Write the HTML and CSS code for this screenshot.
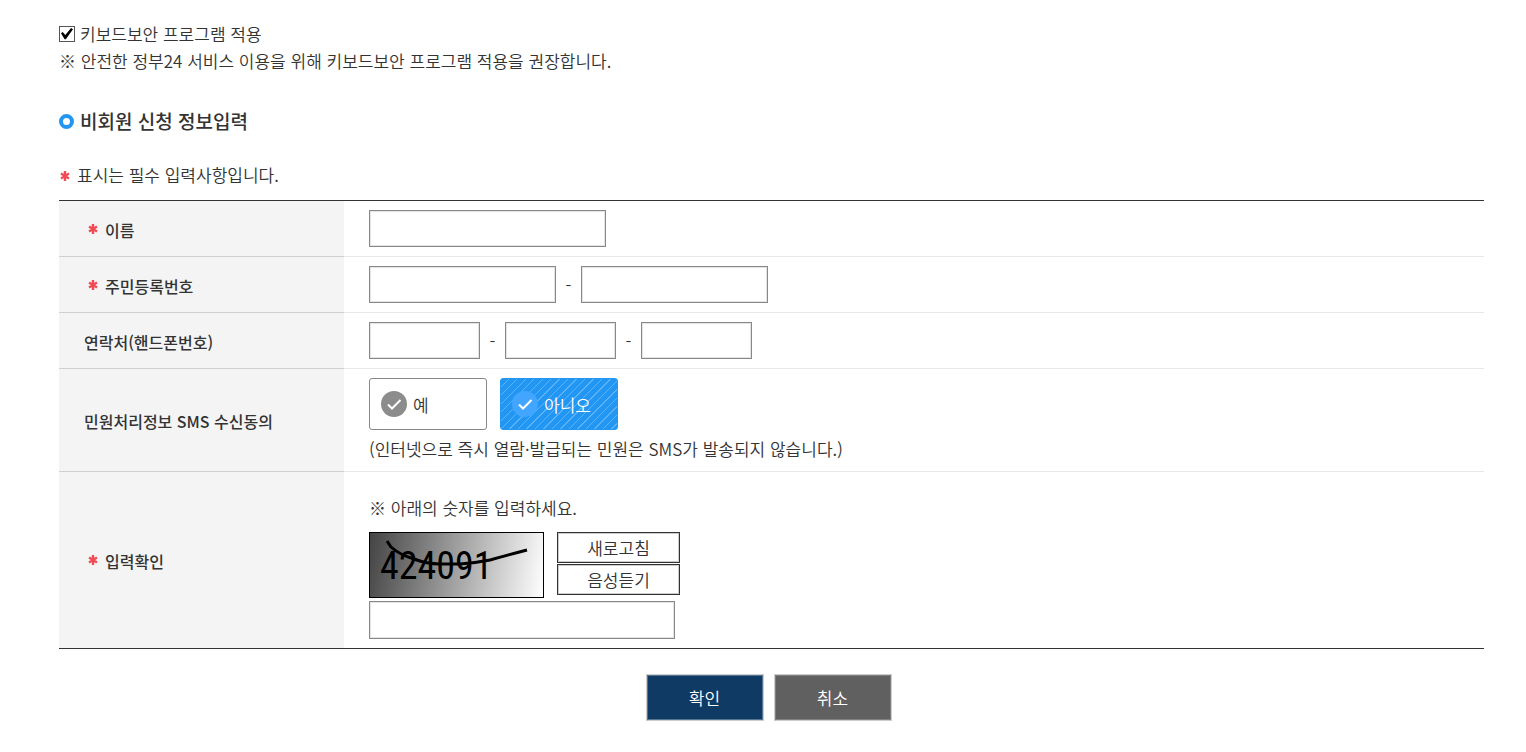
FILE: index.html
```html
<!DOCTYPE html>
<html lang="ko">
<head>
    <meta charset="UTF-8">
    <meta name="viewport" content="width=device-width, initial-scale=1.0">
    <title>비회원 신청</title>
    <link rel="stylesheet" href="styles.css">
</head>
<body>
    <form class="content">
        <div class="security">
            <label class="check"><input type="checkbox" checked>키보드보안 프로그램 적용</label>
            <p>※ 안전한 정부24 서비스 이용을 위해 키보드보안 프로그램 적용을 권장합니다.</p>
        </div>

        <h2 class="title">비회원 신청 정보입력</h2>

        <p class="notice"><svg class="star" viewBox="0 0 10 10"><path d="M5 0v10M1 2.5l8 5M9 2.5l-8 5"/></svg>표시는 필수 입력사항입니다.</p>

        <table class="form-table">
            <tr>
                <th class="required"><svg class="star" viewBox="0 0 10 10"><path d="M5 0v10M1 2.5l8 5M9 2.5l-8 5"/></svg><label for="name">이름</label></th>
                <td><input type="text" id="name" class="field w-name"></td>
            </tr>
            <tr>
                <th class="required"><svg class="star" viewBox="0 0 10 10"><path d="M5 0v10M1 2.5l8 5M9 2.5l-8 5"/></svg><label for="jumin1">주민등록번호</label></th>
                <td>
                    <div class="fields">
                        <input type="text" id="jumin1" class="field w-jumin">
                        <span class="dash">-</span>
                        <input type="password" class="field w-jumin" aria-label="주민등록번호 뒷자리">
                    </div>
                </td>
            </tr>
            <tr>
                <th><label for="phone1">연락처(핸드폰번호)</label></th>
                <td>
                    <div class="fields">
                        <input type="text" id="phone1" class="field w-phone">
                        <span class="dash">-</span>
                        <input type="text" class="field w-phone" aria-label="연락처 가운데 자리">
                        <span class="dash">-</span>
                        <input type="text" class="field w-phone" aria-label="연락처 끝자리">
                    </div>
                </td>
            </tr>
            <tr>
                <th>민원처리정보 SMS 수신동의</th>
                <td>
                    <div class="choices">
                        <label class="choice"><input type="radio" name="sms"><svg class="tick" viewBox="0 0 26 26"><circle cx="13" cy="13" r="13"/><path d="M7 13.5l4 4 8.5-8.5"/></svg>예</label>
                        <label class="choice"><input type="radio" name="sms" checked><svg class="tick" viewBox="0 0 26 26"><circle cx="13" cy="13" r="13"/><path d="M7 13.5l4 4 8.5-8.5"/></svg>아니오</label>
                    </div>
                    <p class="hint">(인터넷으로 즉시 열람·발급되는 민원은 SMS가 발송되지 않습니다.)</p>
                </td>
            </tr>
            <tr>
                <th class="required"><svg class="star" viewBox="0 0 10 10"><path d="M5 0v10M1 2.5l8 5M9 2.5l-8 5"/></svg><label for="answer">입력확인</label></th>
                <td>
                    <p class="guide">※ 아래의 숫자를 입력하세요.</p>
                    <div class="captcha">
                        <svg class="captcha-image" viewBox="0 0 173 64">
                            <text x="10" y="46">424091</text>
                            <path d="M17 8L21 14Q30 22 44 26Q57 31 70 31L90 31Q105 30 120 27Q138 22 157 17"/>
                        </svg>
                        <div class="captcha-buttons">
                            <button type="button">새로고침</button>
                            <button type="button">음성듣기</button>
                        </div>
                    </div>
                    <input type="text" id="answer" class="field w-answer">
                </td>
            </tr>
        </table>

        <div class="actions">
            <button type="submit" class="btn btn-ok">확인</button>
            <button type="button" class="btn btn-cancel">취소</button>
        </div>
    </form>
</body>
</html>
```
FILE: styles.css
```css
* {
    box-sizing: border-box;
}
body {
    margin: 0;
    background: #fff;
    color: #333;
    font-family: "Noto Sans CJK KR", sans-serif;
    font-size: 17px;
    font-weight: 350;
    line-height: 27px;
}
p {
    margin: 0;
}
button, input {
    font: inherit;
    margin: 0;
}
.content {
    padding: 20px 42px 24px 59px;
}
.check {
    display: flex;
    align-items: center;
    gap: 5px;
}
.check input {
    appearance: none;
    width: 16px;
    height: 16px;
    border: 1px solid #555;
    background: #fff;
    display: grid;
}
.check input:checked::before {
    content: "";
    width: 12px;
    height: 12px;
    place-self: center;
    background: #000;
    clip-path: polygon(0 48%, 14% 38%, 36% 62%, 84% 4%, 100% 14%, 40% 98%, 30% 98%);
}
.title {
    display: flex;
    align-items: center;
    gap: 6px;
    margin: 33px 0 26px;
    font-size: 19px;
    font-weight: 500;
    line-height: 28px;
}
.title::before {
    content: "";
    box-sizing: border-box;
    width: 15px;
    height: 15px;
    border: 4px solid #2196f3;
    border-radius: 50%;
}
.star {
    width: 10px;
    height: 10px;
    fill: none;
    stroke: #f04b54;
    stroke-width: 2.4;
}
.notice .star {
    margin: 0 7px 1px 1px;
}

/* form table */
.form-table {
    width: 100%;
    margin-top: 12px;
    border-collapse: separate;
    border-spacing: 0;
    border-top: 1px solid #333;
    border-bottom: 1px solid #333;
}
.form-table th {
    width: 20%;
    padding: 3px 25px 0;
    background: #f4f4f4;
    border-bottom: 1px solid #d0d0d0;
    font-size: 16px;
    font-weight: 500;
    text-align: left;
}
.form-table td {
    padding: 9px 25px;
    border-bottom: 1px solid #e8e8e8;
}
.form-table tr:last-child th,
.form-table tr:last-child td {
    border-bottom: 0;
}
.form-table .required {
    padding-left: 29px;
}
.required .star {
    margin: 0 7px 3px 0;
}
.field {
    display: block;
    height: 37px;
    padding: 0 8px;
    border: 1px solid #888;
    box-shadow: inset 0 0 0 1px #e4e4e4;
}
.w-name { width: 237px; }
.w-jumin { width: 187px; }
.w-phone { width: 111px; }
.w-answer {
    width: 306px;
    height: 38px;
}
.fields {
    display: flex;
    align-items: center;
}
.dash {
    width: 25px;
    text-align: center;
}
.choices {
    display: flex;
    gap: 13px;
    margin-bottom: 6px;
}
.hint {
    line-height: 26px;
}
.choice {
    display: flex;
    align-items: center;
    gap: 6px;
    width: 118px;
    height: 52px;
    padding: 0 11px;
    border: 1px solid #888;
    border-radius: 3px;
}
.choice input {
    position: absolute;
    opacity: 0;
}
.choice:has(:checked) {
    color: #fff;
    border-color: #2196f3;
    background: repeating-linear-gradient(135deg, #2196f3 0 5px, #5cb1f7 5px 6px);
}
.tick {
    width: 26px;
    height: 26px;
    fill: #8c8c8c;
}
.tick path {
    fill: none;
    stroke: #fff;
    stroke-width: 2;
}
:checked + .tick {
    fill: #42a5ff;
}
.guide {
    margin: 13px 0 11px;
}
.captcha {
    display: flex;
    gap: 13px;
    margin-bottom: 3px;
}
.captcha-image {
    width: 175px;
    height: 66px;
    border: 1px solid #000;
    background: linear-gradient(100deg, #444, #fff);
}
.captcha-image text {
    font-family: "Liberation Sans Narrow", "Roboto Condensed", "Open Sans", sans-serif;
    font-size: 38px;
    font-weight: 400;
}
.captcha-image path {
    fill: none;
    stroke: #000;
    stroke-width: 3;
}
.captcha-buttons {
    display: flex;
    flex-direction: column;
    gap: 1px;
}
.captcha-buttons button {
    width: 123px;
    height: 31px;
    padding: 0;
    border: 1px solid #333;
    background: #fff;
    color: #333;
    box-shadow: inset 0 0 0 1px #ccc;
}
.actions {
    display: flex;
    justify-content: center;
    gap: 10px;
    margin-top: 25px;
    padding-right: 6px;
}
.btn {
    width: 118px;
    height: 47px;
    padding: 0;
    color: #fff;
    border: 1px solid #ccc;
}
.btn-ok {
    background: #0f3a63;
    box-shadow: inset 0 0 0 1px #557592;
}
.btn-cancel {
    background: #606060;
    box-shadow: inset 0 0 0 1px #808080;
}
```
